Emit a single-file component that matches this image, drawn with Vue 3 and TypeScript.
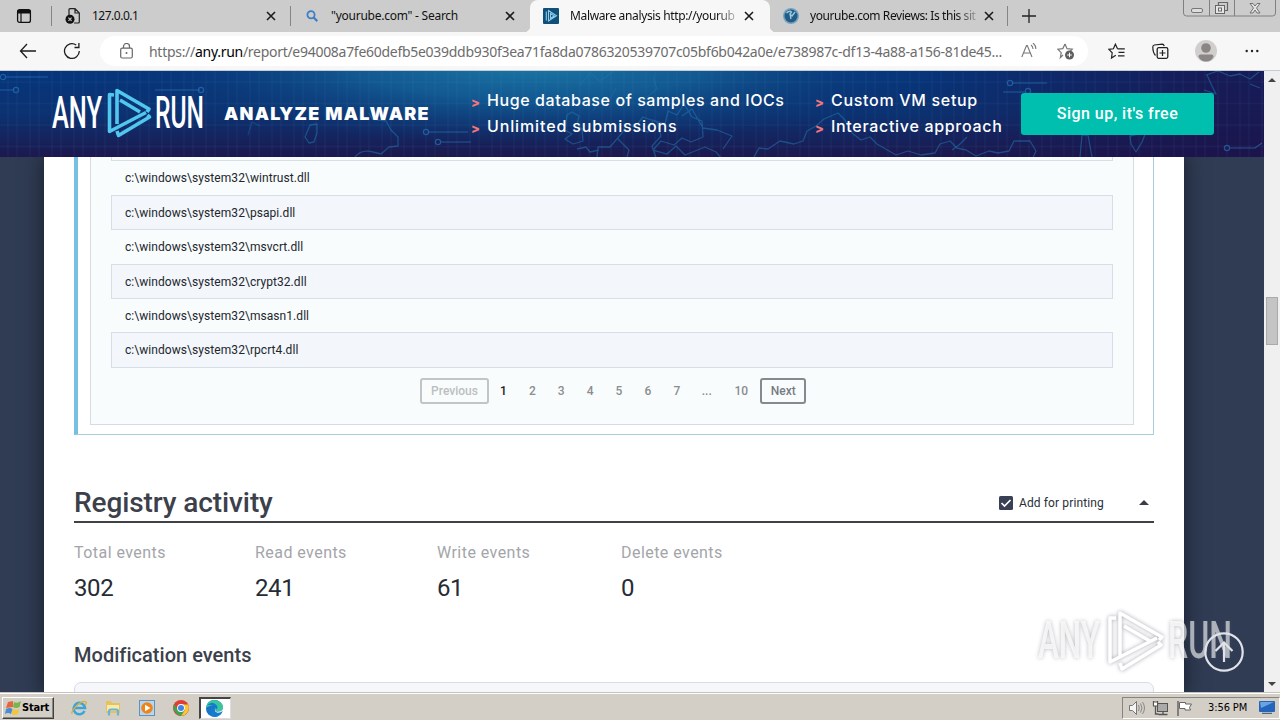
<script setup lang="ts">
interface Tab { title: string; width: number; active?: boolean; icon: string; fade?: boolean; spacing: number }
const tabs: Tab[] = [
  { title: '127.0.0.1', width: 239, icon: 'file', spacing: -0.5 },
  { title: '"yourube.com" - Search', width: 239, icon: 'search', spacing: -0.25 },
  { title: 'Malware analysis http://yourub', width: 240, icon: 'anyrun', active: true, fade: true, spacing: -0.36 },
  { title: 'yourube.com Reviews: Is this sit', width: 238, icon: 'globe', fade: true, spacing: -0.42 },
]
const files: string[] = ['wintrust', 'psapi', 'msvcrt', 'crypt32', 'msasn1', 'rpcrt4']
const pages: string[] = ['1', '2', '3', '4', '5', '6', '7', '...', '10']
const stats: { label: string; value: string }[] = [
  { label: 'Total events', value: '302' },
  { label: 'Read events', value: '241' },
  { label: 'Write events', value: '61' },
  { label: 'Delete events', value: '0' },
]
</script>

<template>
  <div class="screen">
    <header class="tabs">
      <div class="tabmenu">
        <svg width="16" height="16" viewBox="0 0 16 16"><rect x="1.600" y="1.600" width="12.800" height="12.800" rx="2" fill="none" stroke="#111" stroke-width="1.300" /><path d="M1.500 2h13v3.500h-13z" fill="#111" /><path d="M5 5v9" stroke="#111" stroke-width="1.200" /></svg>
        <i class="sep"></i>
      </div>
      <div v-for="(t, i) in tabs" :key="t.title" class="tab" :class="{ active: t.active }" :style="{ width: t.width + 'px' }">
        <svg v-if="t.icon === 'file'" class="ico" width="16" height="16" viewBox="0 0 16 16"><path d="M4 7V1.700Q4 .7 5 .7h5L14.300 5v9q0 1-1 1H9M10 1v4h4" fill="none" stroke="#222" stroke-width="1.200" /><circle cx="5" cy="11.300" r="4.500" fill="#111" /><path d="m3.400 9.700 3.200 3.200m0-3.200-3.200 3.200" stroke="#ccc" stroke-width="1.100" /></svg>
        <svg v-else-if="t.icon === 'search'" class="ico" width="16" height="16" viewBox="0 0 16 16"><circle cx="7" cy="6.800" r="3.600" fill="none" stroke="#3f7fc4" stroke-width="1.800" /><path d="m9.700 9.500 3.600 3.600" stroke="#3f7fc4" stroke-width="2.200" /></svg>
        <svg v-else-if="t.icon === 'anyrun'" class="ico" width="16" height="16" viewBox="0 0 16 16"><rect width="16" height="16" rx="1" fill="#0f5078" /><path d="M3.300 3.500v9M5.500 2.500v10.500l8-5.200z M7.500 5.500v4.800l3.700-2.400z" fill="none" stroke="#8fcbea" stroke-width="1.100" /></svg>
        <svg v-else class="ico" width="16" height="16" viewBox="0 0 16 16"><circle cx="8" cy="8" r="8" fill="#75a3bf" /><circle cx="8" cy="8" r="6.500" fill="#235d87" /><path d="M3.500 5q3-3 5-1L7 6l2 2 3-4M7 6l1 5" fill="none" stroke="#9ccbe0" stroke-width="1.300" /></svg>
        <span class="title" :class="{ faded: t.fade }" :style="{ letterSpacing: t.spacing + 'px' }">{{ t.title }}</span>
        <svg class="close" width="10" height="10" viewBox="0 0 10 10"><path d="m1 1 8 8m0-8-8 8" stroke="#1b1b1b" stroke-width="1.600" /></svg>
        <i v-if="i === 0 || i === 3" class="sep"></i>
      </div>
      <svg class="plus" width="14" height="14" viewBox="0 0 14 14"><path d="M7 0v14M0 7h14" stroke="#222" stroke-width="1.300" /></svg>
      <svg class="winbtns" width="94" height="18" viewBox="0 0 94 18"><path d="M.5 0v13q0 3 3 3h86q3 0 3-3V0M26.500 0v16M51.500 0v16" fill="none" stroke="#808080" /><rect x="8.500" y="8.500" width="11" height="4" rx="1.500" fill="#ddd" stroke="#777" /><path d="M35.500 5V2.500h9v8H42" fill="none" stroke="#666" stroke-width="1.200" /><rect x="32.500" y="5.500" width="9" height="8" fill="#e5e5e5" stroke="#666" /><rect x="35.500" y="8" width="3" height="3" fill="#eee" stroke="#666" /><path d="M67 3.500h3l2 2.500 2-2.500h3l-3.500 4.500 3.500 5h-3l-2-3-2 3h-3l3.500-5z" fill="#e3e3e3" stroke="#666" stroke-width=".9" /></svg>
    </header>

    <nav class="toolbar">
      <svg class="back" width="18" height="16" viewBox="0 0 18 16"><path d="M8 1 1.500 8 8 15M1.500 8H17" fill="none" stroke="#1d1d1d" stroke-width="1.300" /></svg>
      <svg class="reload" width="18" height="18" viewBox="0 0 18 18"><path d="M16.300 9A7.400 7.400 0 1 1 13.200 3M15.900 1v4.500h-4.400" fill="none" stroke="#1d1d1d" stroke-width="1.300" /></svg>
      <div class="address">
        <svg class="lock" width="13" height="16" viewBox="0 0 13 16"><rect x=".7" y="5.200" width="11.600" height="9.800" rx="1.500" fill="none" stroke="#666" stroke-width="1.200" /><path d="M3.500 5V3.500a3 3 0 0 1 6 0V5" fill="none" stroke="#666" stroke-width="1.200" /><circle cx="6.500" cy="10" r="1" fill="#666" /></svg>
        <span class="url">https://<b>any.run</b>/report/e94008a7fe60defb5e039ddb930f3ea71fa8da0786320539707c05bf6b042a0e/e738987c-df13-4a88-a156-81de45...</span>
        <svg class="read" width="16" height="16" viewBox="0 0 16 16"><path d="M.8 14 5.500 2.500h.8L11 14M2.500 10h7M10 2q2 1.500 2 4M12 0q3 2.500 2.800 6" fill="none" stroke="#777" stroke-width="1.100" /></svg>
        <svg class="favadd" width="18" height="17" viewBox="0 0 18 17"><path d="m8 1 2 4.700 5.300.5-2 2M6 12l-2.600 2.500.8-4.800L.8 6.200l5-.6L8 1" fill="none" stroke="#777" stroke-width="1.200" /><circle cx="12.500" cy="12" r="4.500" fill="#5e5e5e" /><path d="M12.500 9.700v4.600M10.200 12h4.600" stroke="#fff" /></svg>
      </div>
      <svg class="fav" width="18" height="17" viewBox="0 0 18 17"><path d="M9.500 5.800 7.400 1.200 5.400 5.800.8 6.300l3.400 3.500L3.500 15l4.300-2.700M9.500 5.800h7.300M10.500 9.300h6M10 12.800h6.500" fill="none" stroke="#222" stroke-width="1.200" /></svg>
      <svg class="coll" width="18" height="17" viewBox="0 0 18 17"><path d="M3.500 12.500Q.8 9.500.8 4q0-1.500 1.500-2l8-.8q1.500 0 1.900 2" fill="none" stroke="#222" stroke-width="1.200" /><rect x="5.200" y="4.700" width="10.600" height="10.600" rx="1.500" fill="none" stroke="#222" stroke-width="1.300" /><path d="M10.500 7v6M7.500 10h6" stroke="#222" stroke-width="1.200" /></svg>
      <svg class="avatar" width="22" height="22" viewBox="0 0 22 22"><circle cx="11" cy="11" r="11" fill="#d1cfce" /><circle cx="11" cy="8" r="4.800" fill="#8b8685" /><path d="M3.500 16.500q0-2 2-2h11q2 0 2 2-2 5-7.500 5t-7.500-5" fill="#8b8685" /></svg>
      <svg class="dots" width="14" height="4" viewBox="0 0 14 4"><circle cx="1.700" cy="2" r="1.200" /><circle cx="7" cy="2" r="1.200" /><circle cx="12.300" cy="2" r="1.200" /></svg>
    </nav>

    <main class="view">
      <div class="page">
        <section class="banner">
          <svg class="map" width="1264" height="86" viewBox="0 0 1264 86">
            <defs>
              <pattern id="grid" width="22" height="21.500" patternUnits="userSpaceOnUse"><path d="M8 0v22M0 11h22M17 0v22" stroke="#55a5dc" stroke-opacity=".1" stroke-width=".8" /></pattern>
              <radialGradient id="glow" gradientUnits="userSpaceOnUse" cx="0" cy="0" r="1" gradientTransform="translate(530 -8) scale(400 82)"><stop offset="0" stop-color="#1b78a6" /><stop offset=".45" stop-color="#145f96" stop-opacity=".85" /><stop offset="1" stop-color="#0e3c78" stop-opacity="0" /></radialGradient>
            </defs>
            <rect width="1264" height="86" fill="url(#glow)" />
            <rect width="1264" height="86" fill="url(#grid)" />
            <g fill="none" stroke="#2b7bc0" stroke-opacity=".6" stroke-width="1.200">
              <path d="M6 6h42M0 19h14M155 19h45M428 61h40M441 71h30M1012 12h35M1003 21h22M1230 77h25l7-5" />
              <circle cx="3" cy="6" r="2.600" /><circle cx="16" cy="19" r="2.600" /><circle cx="201" cy="19" r="2.600" /><circle cx="426" cy="61" r="2.600" /><circle cx="438" cy="71" r="2.600" /><circle cx="1010" cy="12" r="2.600" /><circle cx="1028" cy="20" r="2.600" /><circle cx="1227" cy="77" r="2.600" />
            </g>
            <g fill="none" stroke="#257cb5" stroke-opacity=".5" stroke-width="1.300" stroke-linejoin="round">
              <path d="m305 66 5-12 7-1v9l-3 9-5 1zM355 86q6-8 18-5l8 2 8-7 9-1v-9l-7-7-5-9-14-2-3-6" />
              <path d="m567 44 5-3 7 4-2 8 5 5 1 12-10 3-8-5 7-5-7-4zm10 34 9-2 4 5 9-2m-2 7 1-10 12 0 12-14 5-9 8 3 8-10 14 5 4 14-9 10 4 12-10 5-11-4-12 5M617 67l12 12-2 7m10-28 11 3 5-12 12 4 3-13 9 4 7-11 8 13 10 4 1 16-12 5-9-4-8 7-13-4-8 9 14 4 9-8 9 9 20-8 11 5 6 7 12 1M682 45l10-7 11 19 14 2 15 6-9 13M754 86l5-9 9 1 12-8 14 3 9-3 4-10 9-5 8-7 14-6 7 7 7 13 9 7 9-3 7 7 19 11 12-4 13 4 14-2 5-9 10-3 7 7 9 2 10 6 13-5 9 2 11-2 5-10h16l6 10-4 9 8 8" />
              <path d="m952 79 7-5 8-8M1080 86l2-22h6l4 22M1130 65l16-4-4 10-6 10-5-8zM1206 4l12-4 12 5 10-2 10 5 9-7M1207 4l5 11 4 8-12-4M1250 13l10 4" />
              <path d="m580 14 10-12 10 8 14-10m-21 40 7-12 8 3 8-14M647 26l10-8-4-12M140 48l-7 8-12 4M248 64l4-13 8 4" stroke-opacity=".3" />
            </g>
          </svg>
          <svg class="logo" width="152" height="50" viewBox="0 0 152 50">
            <text x="0" y="39.500" textLength="50" lengthAdjust="spacingAndGlyphs">ANY</text>
            <path class="tri" d="M62 7l-4.500-.5V43.500L94 24.500M65 43l1.500 4.500L97.500 29l-2-2M65 36V2.500L97 21 95 24M68 12l20 12" />
            <text x="103" y="39.500" textLength="49" lengthAdjust="spacingAndGlyphs">RUN</text>
          </svg>
          <strong class="slogan">ANALYZE MALWARE</strong>
          <ul class="features f1"><li>Huge database of samples and IOCs</li><li class="s2">Unlimited submissions</li></ul>
          <ul class="features f2"><li>Custom VM setup</li><li>Interactive approach</li></ul>
          <button class="signup">Sign up, it's free</button>
        </section>

        <article class="sheet">
          <div class="process">
            <div class="panel">
              <ul class="files"><li class="cut"></li><li v-for="f in files" :key="f">c:\windows\system32\{{ f }}.dll</li></ul>
              <div class="pager"><span class="btn prev">Previous</span><span v-for="(p, i) in pages" :key="p" class="num" :class="{ cur: i === 0 }">{{ p }}</span><span class="btn next">Next</span></div>
            </div>
          </div>
          <div class="heading">
            <h1>Registry activity</h1>
            <svg class="check" width="14" height="14" viewBox="0 0 14 14"><rect width="14" height="14" rx="1.500" fill="#3a4054" /><path d="m2.500 7 3 3 6-6" fill="none" stroke="#fff" stroke-width="1.700" /></svg>
            <span class="print">Add for printing</span>
            <i class="caret"></i>
          </div>
          <div class="stats"><div v-for="s in stats" :key="s.label" class="stat"><span>{{ s.label }}</span><b>{{ s.value }}</b></div></div>
          <h2>Modification events</h2>
          <div class="card"></div>
        </article>

        <svg class="mark" width="198" height="66" viewBox="0 0 198 66">
          <g class="marktext"><text x="2" y="50" textLength="62" lengthAdjust="spacingAndGlyphs">ANY</text><text x="132" y="50" textLength="64" lengthAdjust="spacingAndGlyphs">RUN</text></g>
          <path class="marktri" d="M80 10l-6 0V54L121 30M84 55l2 6L125 37l-3-3M84 48V5L126 29l-3 3M88 18l26 15" />
        </svg>
        <svg class="totop" width="40" height="40" viewBox="0 0 40 40"><circle cx="20" cy="20" r="18.700" fill="none" stroke="#dfe3e9" stroke-width="2.200" /><path d="M20 30V11.500M11.500 19 20 10.500 28.500 19" fill="none" stroke="#dfe3e9" stroke-width="2.200" /></svg>
      </div>
      <aside class="scroll"><i class="up"></i><i class="thumb"></i><i class="down"></i></aside>
    </main>

    <footer class="taskbar">
      <div class="start">
        <svg width="17" height="16" viewBox="0 0 17 16"><path d="m3 2 5-1 0 6-7 1z" fill="#e5653c" /><path d="M9 2q3 2 7-1l-1.500 6Q11 9 8 7z" fill="#78b64b" /><path d="M1 9q4-2 6.500 0L6 14q-3-2-6 0z" fill="#4a8cd0" /><path d="M8 9q3 2 6.500 0L13 14q-3 2-6.500 0z" fill="#f3c63b" /></svg>
        <b>Start</b>
      </div>
      <svg class="app" width="16" height="16" viewBox="0 0 16 16"><path d="M13.500 11A5.700 5.700 0 1 1 14 8H4" fill="none" stroke="#39a5dd" stroke-width="2.600" /><path d="M1 14Q0 11 6 5.500T15 2q.8 1-1 3.500" fill="none" stroke="#dcae3b" stroke-width="1.300" /></svg>
      <svg class="app" width="16" height="16" viewBox="0 0 16 16"><path d="M1 1h5l1 2h8v10H1z" fill="#e5c25c" /><path d="M2 5h12v6H2z" fill="#f8e9ad" /><path d="M4 15.500v-4q0-2 2-2h5q2 0 2 2v4" fill="none" stroke="#6bb3d8" stroke-width="2.200" /></svg>
      <svg class="app" width="16" height="16" viewBox="0 0 16 16"><rect x=".5" y=".5" width="15" height="15" fill="#b8d6ed" stroke="#5e93c0" /><circle cx="8" cy="8" r="5.800" fill="#ef8417" /><path d="m6 4.800 5.500 3.200L6 11.200z" fill="#fff" /></svg>
      <svg class="app" width="16" height="16" viewBox="0 0 16 16"><circle cx="8" cy="8" r="8" fill="#df3f31" /><path d="M1 4Q-1 10 4 14q2 2 4 2l4-6H5z" fill="#3fa452" /><path d="M8 4.500h7.200Q17 9 14 13q-2.500 3-6 3l4-6z" fill="#f7c934" /><circle cx="8" cy="8" r="3.900" fill="#fff" /><circle cx="8" cy="8" r="3" fill="#4183e6" /></svg>
      <div class="running"><svg width="17" height="17" viewBox="0 0 16 16"><circle cx="8" cy="8" r="8" fill="#1974c5" /><path d="M0 7Q1 0 8 0q8 1 8 7 0 4-5 4-3-1-1-3Q9 3 0 7" fill="#39c59d" /><path d="M1 5Q6 0 10 5q2 3-1 4 0 4 6 3-3 4-7 4-5-1-4-6 0-3 4-4-4-2-7-1" fill="#147cce" /><path d="M9 7q-2 4 2 5 3 0 5-2V8q-1 3-5 3-3 0-2-4" fill="#fff" /></svg></div>
      <div class="tray">
        <svg width="18" height="16" viewBox="0 0 18 16"><path d="M1.500 5.500h3l4-4v13l-4-4h-3z" fill="#f5f5f5" stroke="#777" /><path d="M10.500 5q1.500 3 0 6M12.500 3.500q3 4.500 0 9M14.500 2q4 6 0 12" fill="none" stroke="#888" /></svg>
        <svg width="18" height="16" viewBox="0 0 18 16"><rect x="5.500" y="3.500" width="10" height="8" fill="#aaa" stroke="#555" /><path d="M6.500 14.500h9M11 12v2M1.500 1v4h4V1M3.500 5v9h3" fill="none" stroke="#555" stroke-width="1.300" /><rect x="1.500" y="2" width="4" height="4" fill="#fff" stroke="#555" /></svg>
        <svg width="17" height="16" viewBox="0 0 17 16"><path d="M2 1v15" stroke="#666" stroke-width="1.500" /><path d="M3.500 2.500h6V4h6l-2 3.500 1 2.500H9V8.500H3.500z" fill="#fff" stroke="#666" /></svg>
        <time>3:56 PM</time>
        <svg class="desk" width="16" height="13" viewBox="0 0 16 13"><rect width="16" height="11" rx="1" fill="#2465b9" /><path d="M1 1h14L2 7z" fill="#69a3e3" /><path d="M3 12.300h10" stroke="#294d7c" /></svg>
      </div>
    </footer>
  </div>
</template>

<style>
html, body { overflow: hidden; background: #fff; }
</style>
<style scoped>
* { box-sizing: border-box; margin: 0; padding: 0; }
svg { display: block; flex: none; }
.screen { width: 1280px; height: 720px; overflow: hidden; display: flex; flex-direction: column; font-family: Roboto, "Liberation Sans", sans-serif; }
.tabs { height: 32px; flex: none; background: #ccc; display: flex; align-items: center; position: relative; font: 12px "Noto Sans", "Open Sans", sans-serif; color: #111; }
.tabmenu { width: 52px; height: 32px; display: flex; align-items: center; padding-left: 16px; justify-content: space-between; flex: none; }
.sep { width: 1px; height: 20px; background: #858585; flex: none; }
.tab { height: 32px; flex: none; display: flex; align-items: center; padding-left: 13px; position: relative; }
.tab.active { background: #f7f7f7; border-radius: 8px 8px 0 0; }
.tab.active::before, .tab.active::after { content: ""; position: absolute; bottom: 0; width: 6px; height: 6px; }
.tab.active::before { left: -6px; background: radial-gradient(circle at 0 0, transparent 6px, #f7f7f7 6.500px); }
.tab.active::after { right: -6px; background: radial-gradient(circle at 100% 0, transparent 6px, #f7f7f7 6.500px); }
.title { margin-left: 11px; width: 168px; white-space: nowrap; line-height: 20px; }
.faded { -webkit-mask-image: linear-gradient(90deg, #000 146px, transparent 172px); mask-image: linear-gradient(90deg, #000 146px, transparent 172px); }
.close { margin-left: 6px; }
.tab .sep { margin-left: auto; }
.plus { margin-left: 14px; }
.winbtns { margin-left: auto; margin-right: 3px; align-self: flex-start; }
.toolbar { height: 39px; flex: none; background: #f7f7f7; display: flex; align-items: center; border-bottom: 1px solid #c5ccd2; }
.back { margin-left: 19px; }
.reload { margin-left: 26px; }
.address { margin-left: 19px; width: 988px; height: 30px; border-radius: 15px; background: #fff; display: flex; align-items: center; padding-left: 20px; }
.url { margin-left: 16px; width: 858px; font: 14px "Noto Sans", "Open Sans", sans-serif; color: #6c6c6c; letter-spacing: -.285px; white-space: nowrap; }
.url b { font-weight: 400; color: #000; }
.read { margin-left: 14px; }
.favadd { margin-left: 20px; }
.fav { margin-left: 20px; }
.coll { margin-left: 26px; }
.avatar { margin-left: 25px; }
.dots { margin-left: 28px; fill: #222; }
.view { height: 621px; flex: none; display: flex; }
.page { width: 1264px; height: 621px; position: relative; overflow: hidden; background: #303c54; flex: none; }
.banner { height: 86px; position: relative; z-index: 2; display: flex; align-items: flex-start; background: linear-gradient(90deg, transparent 0 72%, rgba(28, 18, 74, .75) 96%), linear-gradient(180deg, #06357b 0, #0c3271 50%, #1c184e 100%); }
.map { position: absolute; inset: 0; }
.logo { position: relative; margin: 17px 0 0 52px; }
.logo text { font: 500 44px Roboto, sans-serif; fill: #fff; }
.tri { fill: none; stroke: #50c7ee; stroke-width: 3.600; stroke-linejoin: round; }
.slogan { position: relative; margin: 31px 0 0 20px; width: 247px; font: 900 18px/24px Inter, sans-serif; letter-spacing: 1.250px; color: #fff; white-space: nowrap; }
.features { position: relative; list-style: none; margin-top: 16px; color: #fff; font: 500 16px/26px Inter, sans-serif; white-space: nowrap; }
.features li { position: relative; padding-left: 16px; }
.features li::before { content: ">"; position: absolute; left: 0; top: 3px; font: 800 13px/24px Inter, sans-serif; color: #f4757a; }
.f1 { width: 344px; letter-spacing: .59px; }
.f1 .s2 { letter-spacing: .87px; }
.f2 { width: 206px; letter-spacing: .69px; }
.signup { position: relative; margin-top: 22px; width: 193px; height: 42px; padding-bottom: 2px; border: 0; border-radius: 3px; background: #00bfae; color: #fff; font: 500 16px Roboto, sans-serif; letter-spacing: .46px; white-space: nowrap; }
.sheet { width: 1140px; height: 535px; margin-left: 44px; padding: 0 30px; background: #fff; box-shadow: 0 0 18px 2px rgba(15, 20, 30, .65); }
.process { width: 1080px; height: 278px; border: solid #a8cddd; border-width: 0 1px 1px 4px; border-left-color: #77c0e2; padding-left: 12px; }
.panel { width: 1044px; height: 268px; border: 1px solid #d6dce1; border-top: 0; background: #f9fcfc; padding-left: 20px; }
.files { list-style: none; width: 1002px; }
.files li { height: 34px; padding-left: 14px; font-size: 12px; line-height: 34px; color: #22262e; letter-spacing: .06px; }
.files li.cut { height: 4px; border: 1px solid #d8dee5; border-top: 0; }
.files li:nth-child(odd):not(.cut) { height: 35px; padding-left: 13px; border: 1px solid #d8dee5; background: #f3f6fa; }
.files li:nth-child(6) { height: 33px; }
.files li:nth-child(odd):last-child { height: 36px; }
.pager { display: flex; width: 385px; height: 26px; margin: 10px 0 0 309px; font-size: 12px; font-weight: 500; color: #8a8d91; line-height: 26px; }
.btn { height: 26px; border: 2px solid #86898e; border-radius: 3px; line-height: 22px; text-align: center; color: #777b85; flex: none; }
.prev { width: 69px; border-color: #c2c4c5; color: #bcbfc1; letter-spacing: 0; }
.next { width: 46px; margin-left: auto; }
.num { width: 28.900px; text-align: center; flex: none; }
.num:nth-last-child(3) { width: 31px; }
.num:nth-last-child(2) { width: 38px; }
.cur { color: #1d2027; }
.heading { margin-top: 43px; height: 45px; border-bottom: 2px solid #414148; display: flex; align-items: center; padding-top: 6px; color: #3c404b; position: relative; }
.heading h1 { font-size: 28px; font-weight: 500; letter-spacing: -.1px; width: 925px; line-height: 36px; }
.print { margin-left: 6px; width: 119px; font-size: 12px; letter-spacing: .12px; color: #292e38; }
.caret { width: 0; height: 0; margin-left: 1px; border: solid transparent; border-width: 0 5px 5px; border-bottom-color: #3b3e46; }
.stats { display: flex; height: 80px; margin-top: 18px; }
.stat { width: 182px; display: flex; flex-direction: column; }
.stat:nth-child(1) { width: 181px; }
.stat:nth-child(3) { width: 184px; }
.stat span { font-size: 16px; line-height: 24px; color: #a4a5aa; letter-spacing: .45px; }
.stat b { font-size: 24px; font-weight: 400; line-height: 32px; margin-top: 7px; color: #272b33; letter-spacing: -.4px; }
h2 { margin-top: 19px; font-size: 20px; font-weight: 500; line-height: 30px; height: 42px; color: #3c404b; letter-spacing: .03px; }
.card { height: 20px; border: 1px solid #d8dde5; border-radius: 7px 7px 0 0; background: #f5f7fb; }
.mark { position: absolute; left: 1036px; top: 537px; filter: drop-shadow(0 0 2px rgba(80, 85, 95, .65)); opacity: .8; }
.marktext { font: 500 52px Roboto, sans-serif; fill: rgba(255, 255, 255, .75); }
.marktri { fill: none; stroke: #fff; stroke-width: 3.500; stroke-linejoin: round; }
.totop { position: absolute; left: 1204px; top: 561px; }
.scroll { width: 16px; background: #f0f0f0; display: flex; flex-direction: column; align-items: center; }
.up { border: solid transparent; border-width: 0 4px 4px; border-bottom-color: #444; margin-top: 7px; }
.thumb { width: 12px; height: 48px; margin-top: 215px; background: #c4c4c4; border: 1px solid #aaa; }
.down { border: solid transparent; border-width: 4px 4px 0; border-top-color: #444; margin-top: auto; margin-bottom: 6px; }
.taskbar { height: 28px; flex: none; background: #d4cfc6; border-top: 1px solid #c5c2bb; box-shadow: inset 0 1px #fff; display: flex; align-items: center; padding: 2px 0 0 2px; }
.start { width: 52px; height: 22px; border: 1px solid; border-color: #fff #404040 #404040 #fff; box-shadow: inset -1px -1px #8a8780; display: flex; align-items: center; padding-left: 2px; margin-right: 17px; }
.start b { font: 700 11px "DejaVu Sans Condensed", "Open Sans", sans-serif; letter-spacing: -.2px; }
.app { margin-right: 18px; }
.running { width: 32px; height: 22px; margin-left: -8px; background: #fff; border: solid; border-width: 2px 1px 1px 2px; border-color: #444 #ddd #ddd #444; display: flex; align-items: center; justify-content: center; padding-right: 2px; }
.tray { margin-left: auto; width: 158px; height: 22px; border: 1px solid; border-color: #87847d #fff #fff #87847d; display: flex; align-items: center; gap: 6px; padding-left: 5px; }
.tray time { font: 11px "DejaVu Sans Condensed", sans-serif; margin-left: 9px; width: 42px; letter-spacing: -.1px; white-space: nowrap; }
.desk { margin-left: 3px; }
</style>
